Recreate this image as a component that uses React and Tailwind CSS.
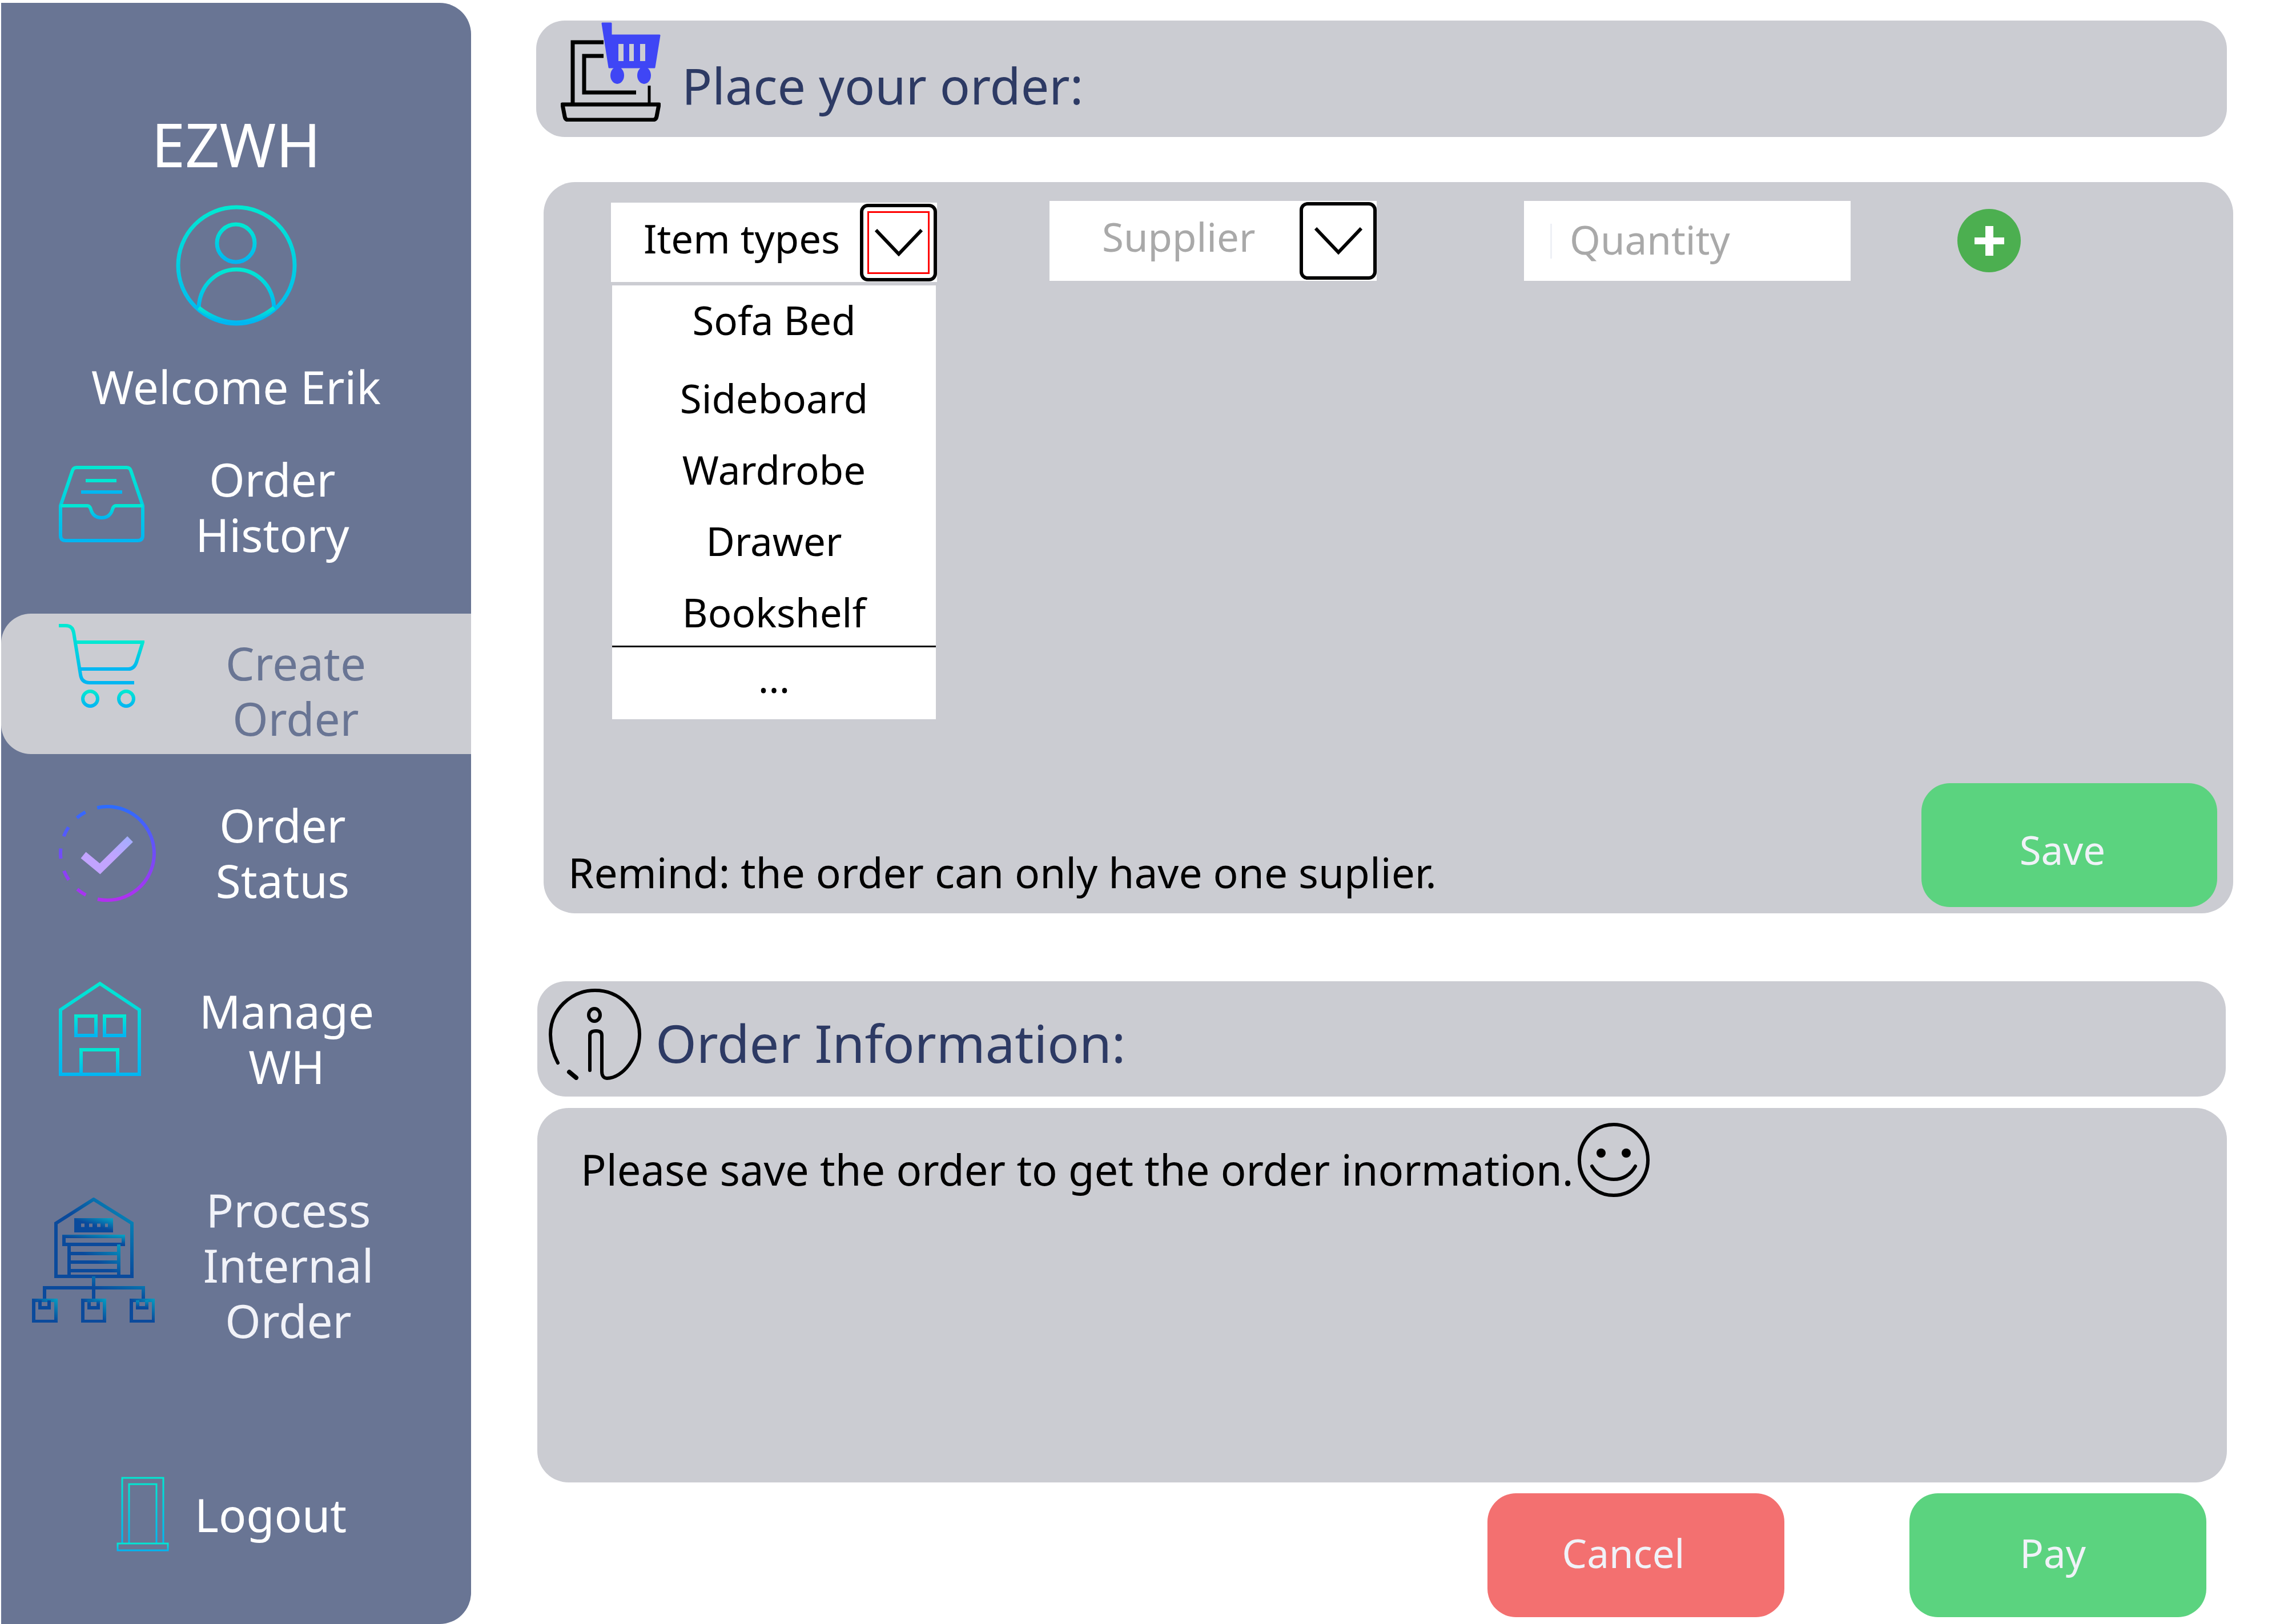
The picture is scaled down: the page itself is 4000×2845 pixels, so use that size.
import React from 'react';

function Grad({ id, x2 = 0, y2 = 1, from = '#00e8d2', to = '#00b6f2' }) {
  return (
    <defs>
      <linearGradient id={id} x1="0" y1="0" x2={x2} y2={y2}>
        <stop offset="0" stopColor={from} />
        <stop offset="1" stopColor={to} />
      </linearGradient>
    </defs>
  );
}

const UserIcon = () => (
  <svg width="212" height="212" viewBox="0 0 212 212" fill="none" stroke="url(#gUser)" strokeWidth="7">
    <Grad id="gUser" />
    <circle cx="106" cy="106" r="102" />
    <circle cx="105" cy="67" r="33" />
    <path d="M40 180C42 138 74 113 106 113C138 113 170 138 172 180" />
    <path d="M40 180C60 196 85 206 106 206C127 206 152 196 172 180" />
  </svg>
);

const InboxIcon = () => (
  <svg className="mt-[26px] shrink-0" width="150" height="134" viewBox="0 0 150 134" fill="none" stroke="url(#gInbox)" strokeWidth="6">
    <Grad id="gInbox" />
    <path d="M3 70L24 8Q26 3 31 3H119Q124 3 126 8L147 70V122Q147 131 138 131H12Q3 131 3 122Z" />
    <path d="M3 70H50Q54 70 56 76Q60 91 75 91Q90 91 94 76Q96 70 100 70H147" />
    <path d="M47 26H101M39 46H111" />
  </svg>
);

const CartIcon = () => (
  <svg className="mt-[17px] shrink-0" width="150" height="150" viewBox="0 0 150 150" fill="none" stroke="url(#gCart)" strokeWidth="6">
    <Grad id="gCart" />
    <path d="M0 4H12Q24 4 26 16L38 90Q40 104 54 104H132" />
    <path d="M31 33H147L136 68Q132 80 122 80H38" />
    <circle cx="55" cy="132" r="13" />
    <circle cx="118" cy="132" r="13" />
  </svg>
);

const StatusIcon = () => (
  <svg className="mt-[14px] shrink-0" width="170" height="170" viewBox="0 0 170 170" fill="none">
    <Grad id="gStatus" from="#2d6cff" to="#b22ff0" />
    <Grad id="gTick" x2={1} y2={-1} from="#c2a4ff" to="#86b6ff" />
    <path d="M85 3A82 82 0 0 1 85 167" stroke="url(#gStatus)" strokeWidth="6" />
    <path d="M85 3A82 82 0 0 0 85 167" stroke="url(#gStatus)" strokeWidth="6" strokeDasharray="18 22" />
    <path d="M43 88L72 112L125 60" stroke="url(#gTick)" strokeWidth="14" />
  </svg>
);

const HouseIcon = () => (
  <svg className="mt-[-3px] shrink-0" width="144" height="166" viewBox="0 0 144 166" fill="none" stroke="url(#gHouse)" strokeWidth="6">
    <Grad id="gHouse" />
    <path d="M3 50L72 4L141 50V163H3Z" />
    <rect x="30" y="61" width="35" height="34" />
    <rect x="80" y="61" width="35" height="34" />
    <path d="M39 163V120H103V163" />
  </svg>
);

const WarehouseIcon = () => (
  <svg className="mt-[28px] shrink-0" width="215" height="219" viewBox="0 0 215 219" fill="none" stroke="url(#gWare)" strokeWidth="6">
    <Grad id="gWare" x2={1} y2={-1} from="#0a4a9c" to="#00e0e0" />
    <path d="M42 45L108 3L175 45V138H42Z" />
    <rect x="77" y="39" width="62" height="19" fill="url(#gWare)" />
    <path d="M86 48.500H92M100 48.500H106M114 48.500H120M128 48.500H133" stroke="#697594" strokeWidth="6" />
    <rect x="56" y="68" width="104" height="14" />
    <path d="M65 82V138M152 82V138M65 98H152M65 113H152M65 128H152" />
    <path d="M108 138V178M22 178V158H195V178" />
    <rect x="3" y="180" width="39" height="37" />
    <rect x="89" y="180" width="38" height="37" />
    <rect x="174" y="180" width="39" height="37" />
    <path d="M14 180V193H30V180M100 180V193H116V180M185 180V193H201V180" />
  </svg>
);

const DoorIcon = () => (
  <svg className="mt-[-17px] shrink-0" width="92" height="131" viewBox="0 0 92 131" fill="none" stroke="url(#gDoor)" strokeWidth="3">
    <Grad id="gDoor" />
    <path d="M10 117V2H82V117" />
    <path d="M22 117V13H70V117" />
    <rect x="2" y="117" width="88" height="12" />
    <path d="M29 54V66" strokeWidth="4" />
  </svg>
);

const PlaceOrderIcon = () => (
  <svg className="shrink-0" width="175" height="177" viewBox="0 0 175 177" fill="none">
    <g stroke="#000" strokeWidth="7">
      <path d="M75 38H21V144" />
      <path d="M75 62H41V126H132" />
      <path d="M155 114V144" strokeWidth="5" />
      <path d="M3 147H172L168 168Q167 174 161 174H13Q8 174 7 168Z" strokeLinejoin="round" />
    </g>
    <path d="M73 5H88V26H173L164 82H85Z" fill="#3f46f5" stroke="#3f46f5" strokeWidth="3" strokeLinejoin="round" />
    <path d="M100 82V90M145 82V90" stroke="#3f46f5" strokeWidth="12" />
    <ellipse cx="99" cy="96" rx="12" ry="15" fill="#3f46f5" />
    <ellipse cx="146" cy="96" rx="12" ry="15" fill="#3f46f5" />
    <rect x="101" y="41" width="9" height="30" fill="#cbccd2" />
    <rect x="120" y="41" width="8" height="30" fill="#cbccd2" />
    <rect x="139" y="41" width="9" height="30" fill="#cbccd2" />
  </svg>
);

const InfoIcon = () => (
  <svg className="mt-[13px] ml-[20px] shrink-0" width="162" height="160" viewBox="0 0 162 160" fill="none" stroke="#000" strokeWidth="6" strokeLinecap="round">
    <path d="M16 130C8 115 3 98 3 80C3 38 38 3 81 3C124 3 159 38 159 80C159 118 130 157 102 157C96 157 93 152 93 145V82Q93 74 83 74Q72 74 72 82V143" />
    <path d="M36 146L48 156" strokeWidth="8" />
    <ellipse cx="80" cy="46" rx="10" ry="11" strokeWidth="6" />
  </svg>
);

const Smiley = () => (
  <svg className="mt-[26px] ml-[7px] shrink-0" width="126" height="130" viewBox="0 0 126 130" fill="none" stroke="#000" strokeWidth="6">
    <ellipse cx="63" cy="65" rx="60" ry="62" />
    <circle cx="41" cy="53" r="8" fill="#000" stroke="none" />
    <circle cx="85" cy="53" r="8" fill="#000" stroke="none" />
    <path d="M25 76Q38 99 63 99Q88 99 101 76" strokeLinecap="round" />
  </svg>
);

const Chevron = () => (
  <svg width="84" height="48" viewBox="0 0 84 48" fill="none" stroke="#000" strokeWidth="6">
    <path d="M2 2L42 44L82 2" />
  </svg>
);

function Nav({ className = '', icon, labelClass = '', lines, color = 'text-white' }) {
  return (
    <div className={`flex items-start ${className}`}>
      {icon}
      <div className={`text-center ${color} ${labelClass}`}>
        {lines.map((l) => (
          <div key={l}>{l}</div>
        ))}
      </div>
    </div>
  );
}

function Sidebar() {
  return (
    <aside className="ml-[2px] mt-[5px] h-[2840px] w-[823px] shrink-0 rounded-tr-[55px] rounded-br-[55px] bg-[#697594] text-[80px] leading-[97px] text-white">
      <div className="flex flex-col items-center pt-[194px]">
        <div className="text-[106px] leading-[106px]">EZWH</div>
        <div className="mt-[54px]">
          <UserIcon />
        </div>
        <div className="mt-[57px] whitespace-nowrap">Welcome Erik</div>
      </div>

      <Nav className="mt-[65px] pl-[101px]" icon={<InboxIcon />} labelClass="ml-[24px] w-[400px]" lines={['Order', 'History']} />

      {/* active item */}
      <div className="mt-[91px] h-[246px] rounded-l-[52px] bg-[#cbccd2]">
        <Nav className="pl-[101px]" icon={<CartIcon />} labelClass="ml-[65px] mt-[37px] w-[400px]" color="text-[#697594]" lines={['Create', 'Order']} />
      </div>

      <Nav className="mt-[75px] pl-[101px]" icon={<StatusIcon />} labelClass="ml-[22px] w-[400px]" lines={['Order', 'Status']} />
      <Nav className="mt-[132px] pl-[101px]" icon={<HouseIcon />} labelClass="ml-[55px] w-[400px]" lines={['Manage', 'WH']} />
      <Nav className="mt-[154px] pl-[54px]" icon={<WarehouseIcon />} labelClass="ml-[34px] w-[400px]" color="text-[#f1f2f8]" lines={['Process', 'Internal', 'Order']} />

      <div className="mt-[243px] flex items-start pl-[202px]">
        <DoorIcon />
        <div className="ml-[45px]">Logout</div>
      </div>
    </aside>
  );
}

function ItemTypes() {
  return (
    <div className="mt-[3px] ml-[118px] w-[571px] shrink-0 text-black">
      <div className="flex h-[139px] items-center bg-white">
        <span className="pb-[14px] pl-[57px]">Item types</span>
        <div className="ml-auto flex h-[136px] w-[135px] items-center justify-center rounded-[14px] border-[6px] border-black">
          <div className="flex h-[110px] w-[109px] items-center justify-center border-[3px] border-[#ff0000]">
            <Chevron />
          </div>
        </div>
      </div>
      <div className="mt-[6px] ml-[2px] h-[760px] w-[567px] bg-white text-center leading-[125px]">
        <div className="mb-[14px] leading-[121px]">Sofa Bed</div>
        <div>Sideboard</div>
        <div>Wardrobe</div>
        <div>Drawer</div>
        <div className="mt-[3px] leading-[118px]">Bookshelf</div>
        <div className="border-t-[3px] border-black leading-[107px]">...</div>
      </div>
    </div>
  );
}

function OrderForm() {
  return (
    <section className="mt-[79px] ml-[13px] flex h-[1281px] w-[2959px] flex-col rounded-[55px] bg-[#cbccd2] text-[69px]">
      <div className="flex items-start pt-[33px]">
        <ItemTypes />
        <div className="ml-[197px] flex h-[140px] w-[573px] shrink-0 items-center bg-white text-[#a9a9a9]">
          <span className="pb-[14px] pl-[92px]">Supplier</span>
          <div className="ml-auto flex h-[136px] w-[135px] items-center justify-center rounded-[14px] border-[6px] border-black">
            <Chevron />
          </div>
        </div>
        <div className="ml-[258px] flex h-[140px] w-[572px] shrink-0 items-center bg-white text-[#a9a9a9]">
          <div className="ml-[46px] mr-[31px] h-[61px] w-[3px] bg-[#eef0f6]" />
          <span className="pb-[4px]">Quantity</span>
        </div>
        <div className="mt-[14px] ml-[187px] flex h-[111px] w-[111px] items-center justify-center rounded-full bg-[#4caf50]">
          <svg width="52" height="52" viewBox="0 0 52 52" fill="#fff">
            <rect x="19" y="0" width="14" height="52" />
            <rect x="0" y="20" width="52" height="12" />
          </svg>
        </div>
      </div>
      <div className="mt-auto flex items-end justify-between pb-[11px] pr-[28px]">
        <div className="mb-[13px] ml-[43px] whitespace-nowrap text-[73px] leading-[97px] text-black">Remind: the order can only have one suplier.</div>
        <button className="flex h-[217px] w-[518px] items-center justify-center rounded-[50px] bg-[#5bd37f] pt-[16px] pr-[24px] text-[#f0f2f8]">Save</button>
      </div>
    </section>
  );
}

export default function App() {
  return (
    <div className="flex h-[2845px] w-[4000px] overflow-hidden bg-white font-['Noto_Sans',sans-serif]">
      <Sidebar />
      <main className="ml-[114px]">
        <header className="mt-[36px] flex h-[204px] w-[2961px] rounded-[50px] bg-[#cbccd2] pl-[43px]">
          <PlaceOrderIcon />
          <h1 className="mt-[58px] ml-[37px] text-[88px] leading-[110px] text-[#2d3a64]">Place your order:</h1>
        </header>

        <OrderForm />

        <div className="mt-[119px] ml-[2px] flex h-[202px] w-[2957px] rounded-[50px] bg-[#cbccd2]">
          <InfoIcon />
          <h2 className="mt-[53px] ml-[25px] text-[92px] leading-[110px] text-[#2d3a64]">Order Information:</h2>
        </div>

        <div className="mt-[20px] ml-[2px] flex h-[656px] w-[2959px] items-start rounded-[55px] bg-[#cbccd2] pl-[76px]">
          <p className="mt-[59px] whitespace-nowrap text-[74px] leading-[97px] text-black">Please save the order to get the order inormation.</p>
          <Smiley />
        </div>

        <div className="mt-[19px] ml-[1666px] flex gap-[219px] text-[69px] text-[#f0f2f8]">
          <button className="flex h-[217px] w-[520px] items-center justify-center rounded-[50px] bg-[#f37070] pr-[44px] pb-[8px]">Cancel</button>
          <button className="flex h-[217px] w-[520px] items-center justify-center rounded-[50px] bg-[#5bd37f] pr-[18px] pb-[8px]">Pay</button>
        </div>
      </main>
    </div>
  );
}
